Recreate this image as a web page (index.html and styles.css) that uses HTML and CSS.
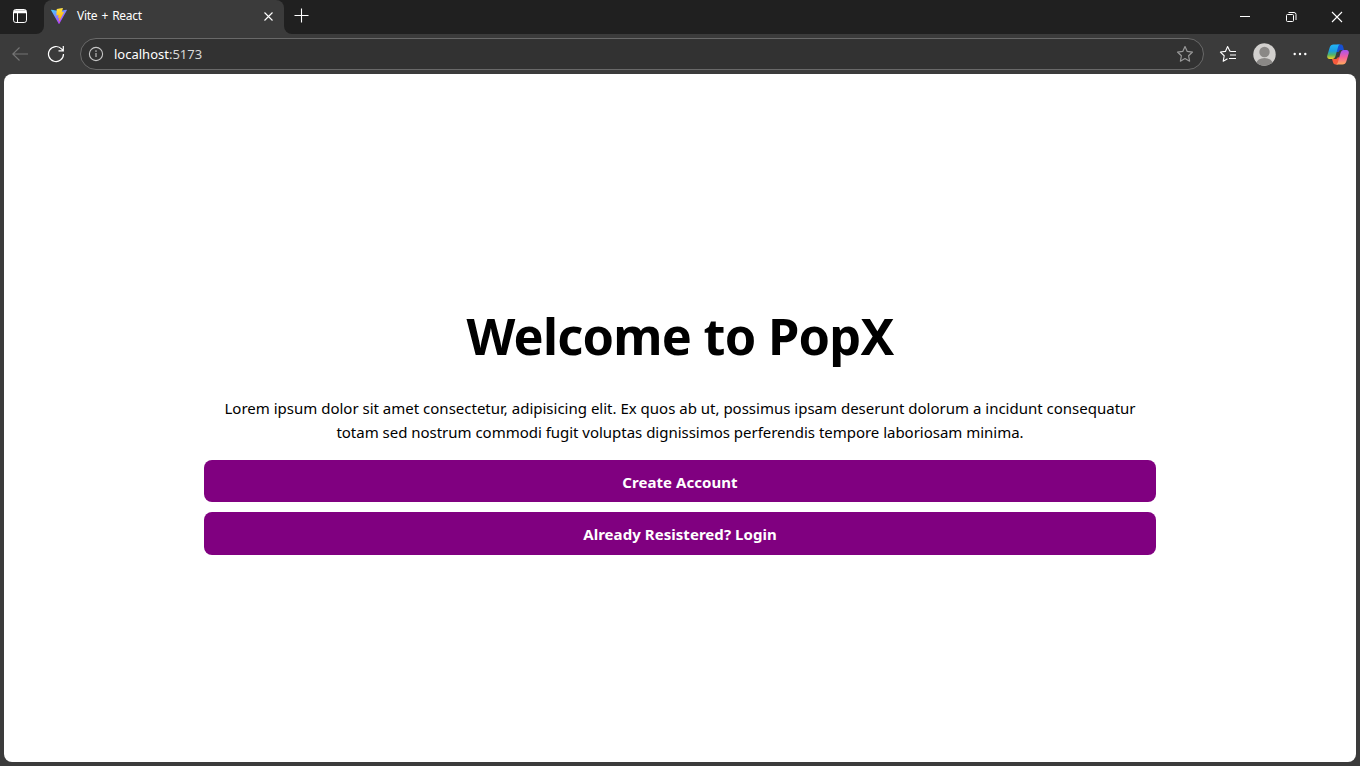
FILE: index.html
```html
<!DOCTYPE html>
<html lang="en">
<head>
<meta charset="utf-8">
<title>Vite + React</title>
<link rel="stylesheet" href="styles.css">
</head>
<body>
<div class="browser">
  <header class="tabbar">
    <div class="tab-actions">
      <svg width="16" height="16" viewBox="0 0 16 16" fill="none" stroke="#fff"><rect x="1.5" y="1.5" width="13" height="13" rx="2.3"/><path d="M2 3.2h12M2 4.5h12" stroke-width="1.7"/><path d="M5.5 5v9"/></svg>
    </div>
    <div class="tab">
      <svg class="vite" width="16" height="16" viewBox="0 0 256 257">
        <defs>
          <linearGradient id="va" x1="0" y1="0" x2=".6" y2="1"><stop offset="0" stop-color="#41d1ff"/><stop offset="1" stop-color="#bd34fe"/></linearGradient>
          <linearGradient id="vb" x1=".4" y1="0" x2=".5" y2="1"><stop offset="0" stop-color="#ffea83"/><stop offset=".1" stop-color="#ffdd35"/><stop offset="1" stop-color="#ffa800"/></linearGradient>
        </defs>
        <path fill="url(#va)" d="M255 38 134 253c-2 5-9 5-11 0L1 38c-3-5 1-11 7-10l120 21L247 28c6-1 10 5 8 10z"/>
        <path fill="url(#vb)" d="m185 1-90 17c-2 0-3 2-3 4l-6 94c0 3 2 4 5 4l25-6c3 0 5 2 4 4l-7 37c-1 2 1 5 4 4l15-5c3-1 5 2 4 4l-12 57c-1 4 4 6 6 3l77-151c2-2-1-5-4-5l-26 5c-2 1-4-2-4-4l17-59c1-3-2-5-5-4z"/>
      </svg>
      <span class="tab-title">Vite + React</span>
      <svg class="tab-close" width="9" height="9" viewBox="0 0 9 9" stroke="#fff" stroke-width="1.1"><path d="m.5.5 8 8m0-8-8 8"/></svg>
    </div>
    <svg class="new-tab" width="15" height="15" viewBox="0 0 15 15" stroke="#fff" stroke-width="1.1"><path d="M7.5.5v14M.5 7.5h14"/></svg>
    <div class="window-controls">
      <svg width="46" height="34" viewBox="0 0 46 34" stroke="#fff" fill="none"><path d="M18 16.5h10"/></svg>
      <svg width="46" height="34" viewBox="0 0 46 34" stroke="#fff" fill="none"><rect x="18.500" y="14.500" width="7" height="7" rx="1"/><path d="M20.500 12.500h5.500a2 2 0 0 1 2 2v5.500"/></svg>
      <svg width="46" height="34" viewBox="0 0 46 34" stroke="#fff" fill="none" stroke-width="1.1"><path d="m18 12 10 10m0-10L18 22"/></svg>
    </div>
  </header>
  <nav class="toolbar">
    <svg class="back" width="16" height="14" viewBox="0 0 16 14" fill="none" stroke="#757575" stroke-width="1.1"><path d="M16 7H.8M7.500.5.8 7l6.700 6.500"/></svg>
    <svg class="reload" width="18" height="18" viewBox="0 0 18 18" fill="none" stroke="#fff" stroke-width="1.200"><path d="M16.500 9a7.500 7.500 0 1 1-2-5.100l1.700 1.800M16.300 1v4.800h-4.800"/></svg>
    <div class="address">
      <svg class="info" width="16" height="16" viewBox="0 0 16 16" fill="none" stroke="#c6c6c6" stroke-width="1.100"><circle cx="8" cy="8" r="6.600"/><path d="M8 7v4"/><circle cx="8" cy="5" r=".3"/></svg>
      <span class="url">localhost<span class="port">:5173</span></span>
      <svg class="star" width="18" height="18" viewBox="0 0 18 18" fill="none" stroke="#999" stroke-width="1.200" stroke-linejoin="round"><path d="m9 1.500 2.250 4.900 5.250.65-3.900 3.700 1 5.450L9 13.600l-4.600 2.600 1-5.450-3.900-3.700 5.250-.65z"/></svg>
    </div>
    <svg class="favorites" width="18" height="18" viewBox="0 0 18 18" fill="none" stroke="#fff" stroke-width="1.100" stroke-linejoin="round"><path d="M8.500 13.700 4.200 16.200l1-5.450L1.400 7.050l5-.65L8.600 1.500l2.200 4.600 1.200.4M11.500 6.500h5.500M11 10h6M10 13.500h7"/></svg>
    <svg class="avatar" width="23" height="23" viewBox="0 0 23 23"><defs><clipPath id="face"><circle cx="11.500" cy="11.500" r="11.200"/></clipPath></defs><circle cx="11.500" cy="11.500" r="11.200" fill="#d2d0ce"/><g fill="#8a8886" clip-path="url(#face)"><circle cx="11.500" cy="9" r="5.200"/><ellipse cx="11.500" cy="20.500" rx="8" ry="5.500"/></g></svg>
    <svg class="more" width="14" height="4" viewBox="0 0 14 4" fill="#fff"><circle cx="1.700" cy="2" r="1.200"/><circle cx="7" cy="2" r="1.200"/><circle cx="12.300" cy="2" r="1.200"/></svg>
    <svg class="copilot" width="22" height="21" viewBox="0 0 22 21">
      <defs>
        <linearGradient id="ca" x1="0" y1="0" x2="0" y2="1"><stop offset="0" stop-color="#22b4f8"/><stop offset=".45" stop-color="#1d9fde"/><stop offset=".72" stop-color="#55b565"/><stop offset="1" stop-color="#f5cf1f"/></linearGradient>
        <linearGradient id="cb" x1="0" y1="0" x2="0" y2="1"><stop offset="0" stop-color="#a653f4"/><stop offset=".5" stop-color="#f5609c"/><stop offset="1" stop-color="#ffa95b"/></linearGradient>
      </defs>
      <path fill="#174fd2" d="M10 .5h3.500c1.400 0 2.200.6 2.600 1.900L17 6h-3c-1.400 0-2 .7-2.400 2L9 8z"/>
      <path fill="#f65a3c" d="M5 15h3.500c1.400 0 2-.7 2.400-2l2.100 1-2 6.500H8.500c-1.400 0-2-.6-2.400-1.900z"/>
      <path fill="url(#ca)" d="M6.500.5h7c-1.200 0-1.900.7-2.300 2L8.500 12c-.6 2-1.700 3-3.300 3H2.500C.6 15-.2 13.500.3 11.500l2.400-8C3.300 1.500 4.500.5 6.500.5z"/>
      <path fill="url(#cb)" d="M15.500 20.500h-7c1.200 0 1.900-.7 2.300-2L13.500 9c.6-2 1.700-3 3.300-3h2.700c1.900 0 2.700 1.500 2.200 3.500l-2.400 8c-.6 2-1.800 3-3.800 3z"/>
    </svg>
  </nav>
  <main class="page">
    <section class="welcome">
      <h1 class="title">Welcome to PopX</h1>
      <p class="intro"><span class="line-one">Lorem ipsum dolor sit amet consectetur, adipisicing elit. Ex quos ab ut, possimus ipsam deserunt dolorum a incidunt consequatur</span><br><span class="line-two">totam sed nostrum commodi fugit voluptas dignissimos perferendis tempore laboriosam minima.</span></p>
      <button class="button create">Create Account</button>
      <button class="button login">Already Resistered? Login</button>
    </section>
  </main>
</div>
</body>
</html>
```
FILE: styles.css
```css
* { box-sizing: border-box; }
body { margin: 0; font-family: "Noto Sans", "Open Sans", sans-serif; }
svg { display: block; flex: none; }
.browser { display: flex; flex-direction: column; width: 1360px; height: 766px; background: #3b3b3b; overflow: hidden; }
.tabbar { display: flex; height: 34px; background: #3b3b3b; color: #fff; }
.tab-actions { width: 44px; padding: 8px 0 0 12px; background: #202020; border-bottom-right-radius: 8px; }
.tab { display: flex; align-items: center; width: 240px; height: 34px; padding: 0 11px 2px 7px; background: linear-gradient(#202020, #202020) left top / 8px 8px no-repeat, linear-gradient(#202020, #202020) right top / 8px 8px no-repeat; position: relative; z-index: 0; }
.tab::before { content: ""; position: absolute; inset: 0; z-index: -1; background: #3b3b3b; border-radius: 8px 8px 0 0; }
.tab-title { margin-left: 10px; font-size: 12px; line-height: 16px; letter-spacing: -0.3px; word-spacing: 1.4px; white-space: nowrap; }
.tab-close { margin-left: auto; }
.new-tab, .window-controls { background: #202020; }
.new-tab { box-sizing: content-box; padding: 8px 0 11px 10px; border-bottom-left-radius: 8px; }
.window-controls { display: flex; flex: 1; justify-content: flex-end; }
.toolbar { display: flex; align-items: center; height: 40px; padding: 0 10px 0 12px; color: #fff; }
.reload { margin-left: 19px; }
.address { display: flex; align-items: center; width: 1124px; height: 32px; margin-left: 15px; padding: 0 9px 0 7px; background: #323232; border: 1px solid #696969; border-radius: 16px; }
.url { margin-left: 10px; font-size: 13px; line-height: 20px; white-space: nowrap; }
.port { color: #d8d8d8; }
.star { margin-left: auto; }
.favorites { margin-left: 15px; }
.avatar { margin-left: 15.5px; }
.more { margin-left: 17.5px; }
.copilot { margin-left: 20px; }
.page { width: 1352px; height: 688px; margin: 0 4px 4px; padding: 227px 200px 0; background: #fff; border-radius: 8px; }
.welcome { display: flex; flex-direction: column; }
.title { height: 72px; margin: -1px 0 0; color: #000; font-size: 50.5px; font-weight: 700; line-height: 72px; letter-spacing: -0.76px; text-align: center; white-space: nowrap; }
.intro { height: 48px; margin: 24px 0 15px; color: #000; font-size: 15px; line-height: 24px; text-align: center; white-space: nowrap; }
.line-two { letter-spacing: -0.02px; }
.button { height: 42px; margin: 1px 0 0; padding: 0; border: 0; border-radius: 8px; background: #800080; color: #fff; font: 700 15px/42px "Noto Sans", sans-serif; letter-spacing: 0.05px; text-align: center; }
.create { padding-top: 1px; }
.login { height: 43px; margin-top: 10px; }
```
